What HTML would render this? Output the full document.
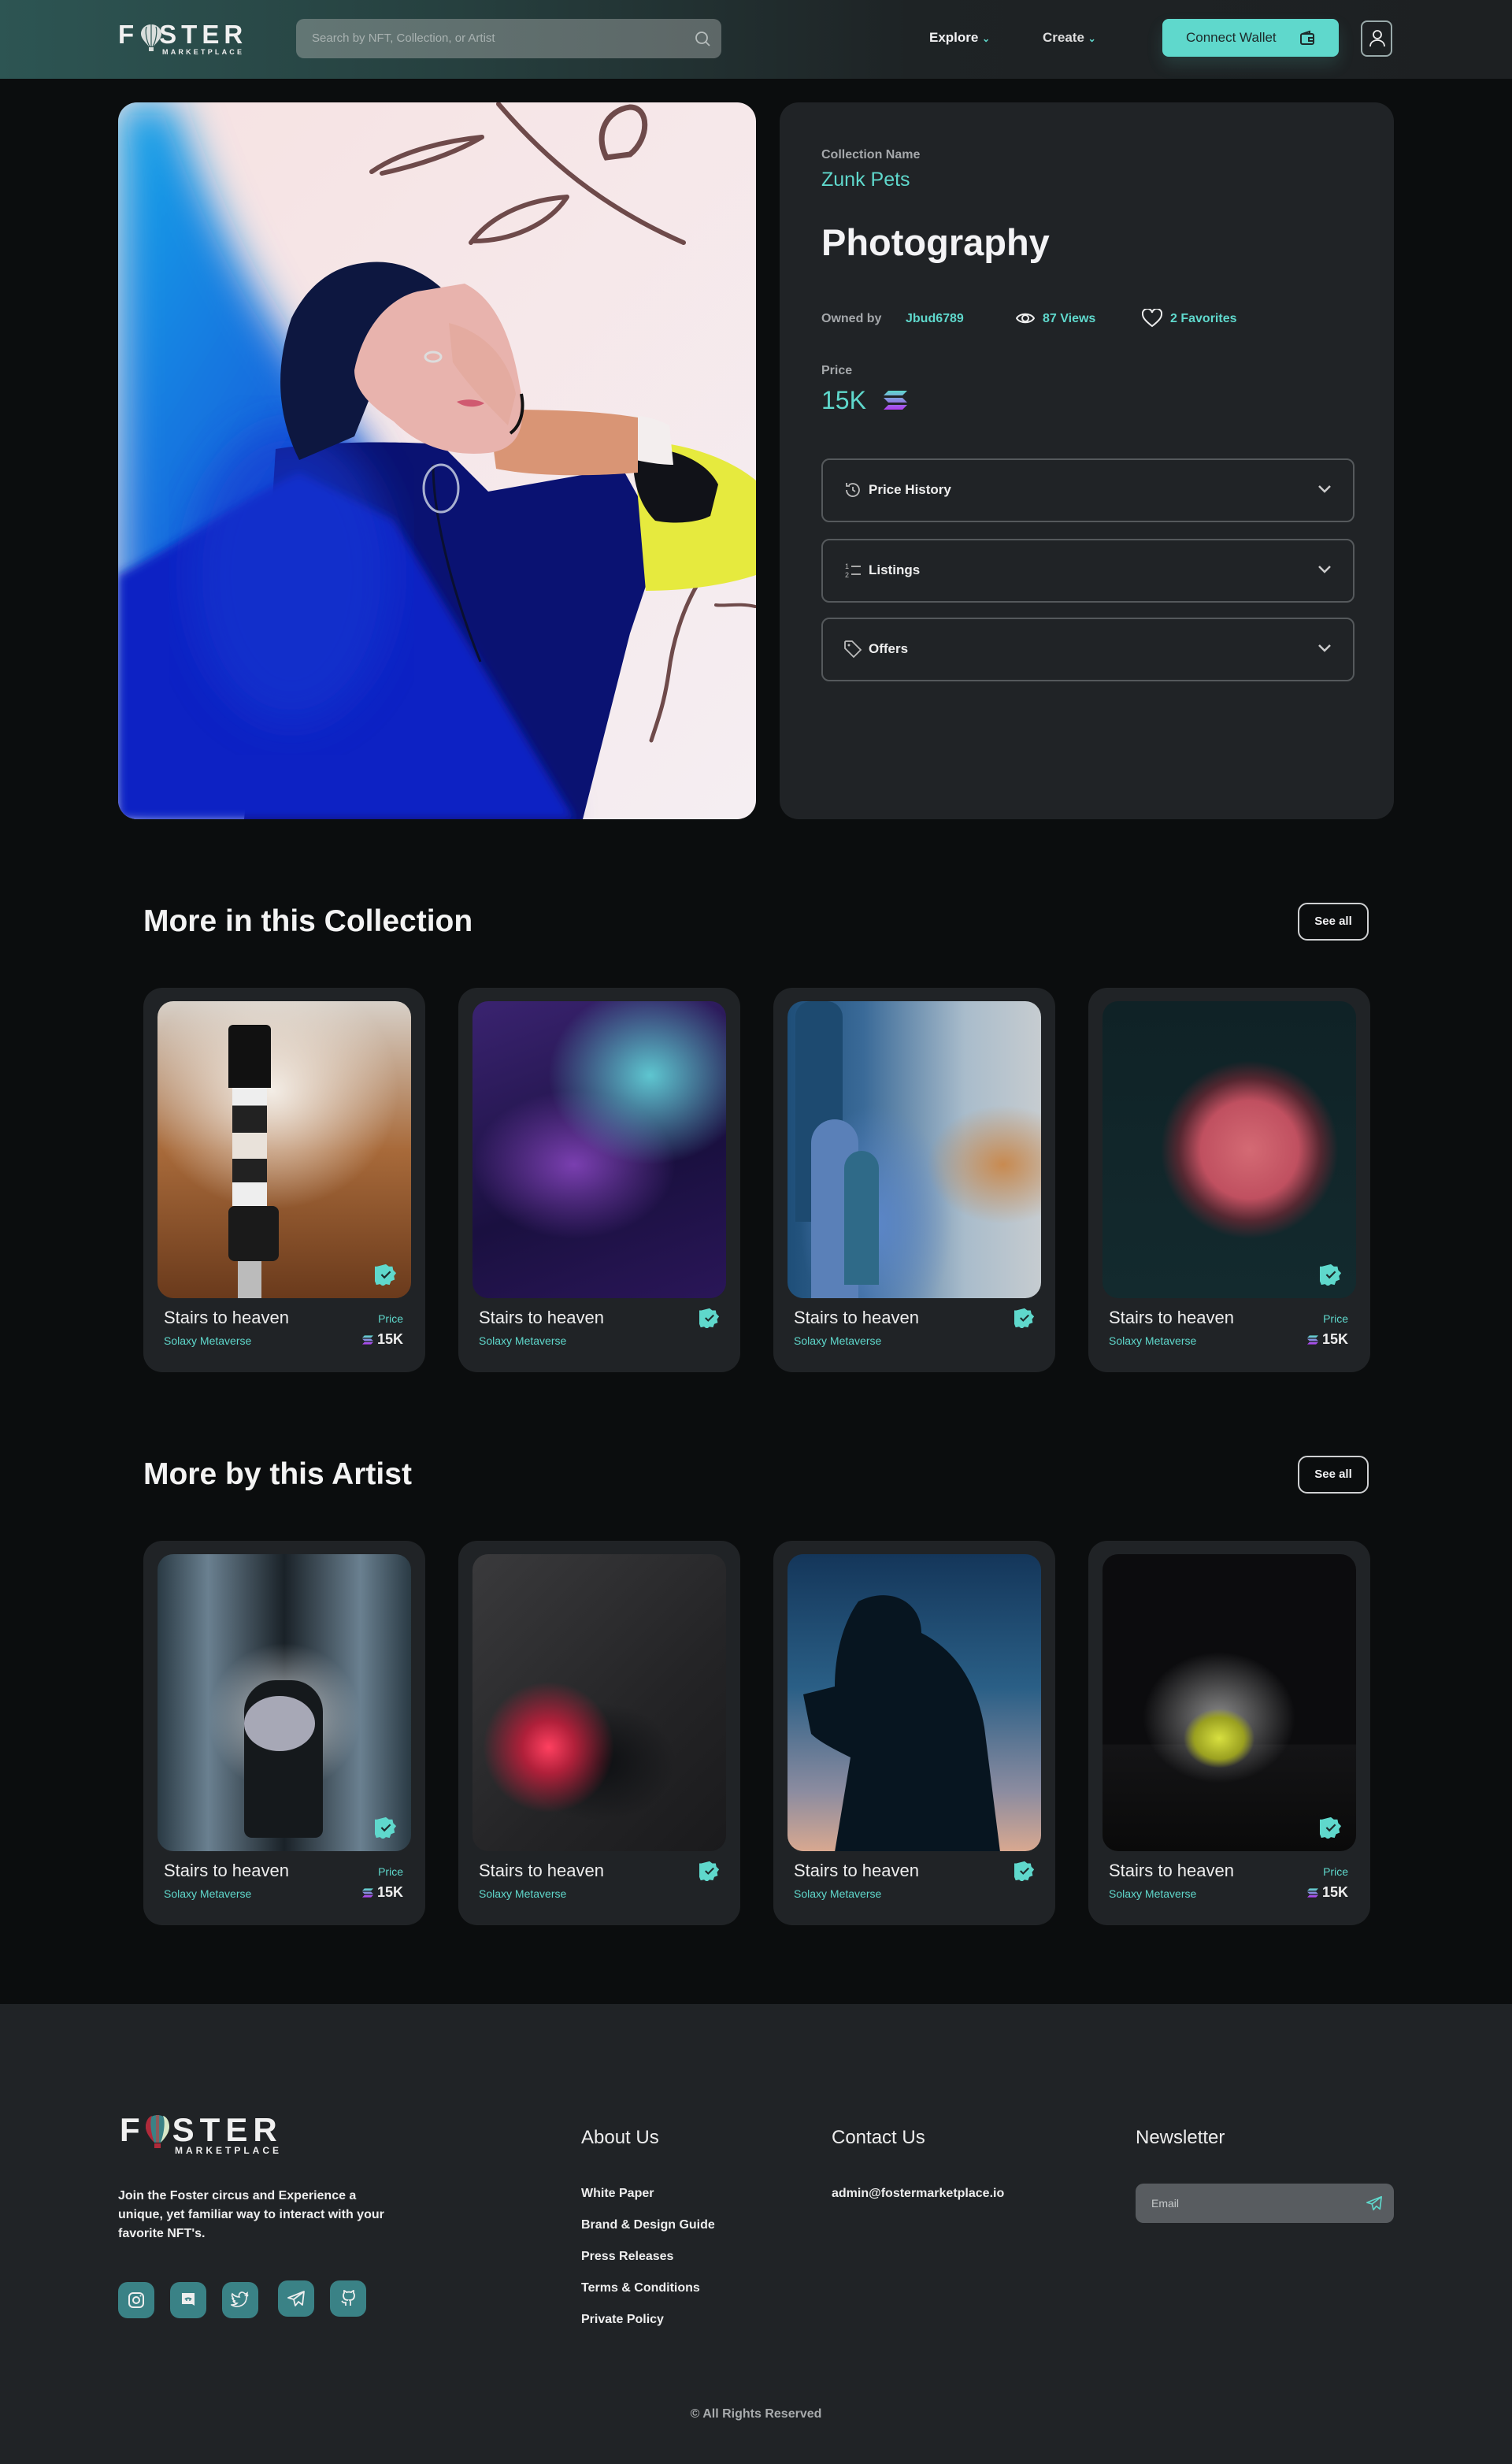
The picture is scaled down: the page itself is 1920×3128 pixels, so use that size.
<!DOCTYPE html>
<html><head><meta charset="utf-8">
<style>
*{margin:0;padding:0;box-sizing:border-box}
body{width:1920px;height:3128px;background:#0b0d0e;font-family:"Liberation Sans",sans-serif;color:#f1f1f3;position:relative;overflow:hidden}
.a{position:absolute}
.hdr{left:0;top:0;width:1920px;height:100px;background:linear-gradient(90deg,#2d5553 0%,#26403f 30%,#1e2325 60%,#1d2022 100%)}
.logo{font-weight:700;letter-spacing:6px;color:#f0f0f0}
.search{left:376px;top:24px;width:540px;height:50px;border-radius:10px;background:linear-gradient(90deg,#627674,#5d6767);color:#a9b2b1;font-size:15px;line-height:50px;padding-left:20px}
.nav{font-size:17px;font-weight:700;top:38px}
.btn{left:1476px;top:24px;width:224px;height:48px;border-radius:8px;background:#5fd8cc;color:#1d2a2a;font-size:17px;line-height:48px;padding-left:30px;box-shadow:0 10px 20px rgba(95,216,204,.15)}
.prof{left:1728px;top:26px;width:40px;height:46px;border:2px solid #9aa;border-radius:8px}
.panel{left:990px;top:130px;width:780px;height:910px;background:#202326;border-radius:24px}
.acc{left:1043px;width:677px;height:81px;border:2px solid #55595c;border-radius:10px}
.acc span{position:absolute;left:58px;top:28px;font-size:17px;font-weight:700;color:#eee}
.acc svg.ic{position:absolute;left:26px;top:26px}
.acc svg.ch{position:absolute;right:26px;top:30px}
.h2{font-size:39px;font-weight:700;color:#f3f3f3}
.see{left:1648px;width:90px;height:48px;border:2px solid #cfd0d2;border-radius:12px;font-size:15px;font-weight:700;text-align:center;line-height:44px}
.card{width:358px;height:488px;background:#202326;border-radius:24px}
.card .im{position:absolute;left:18px;top:17px;width:322px;height:377px;border-radius:20px;overflow:hidden}
.card .t{position:absolute;left:26px;top:406px;font-size:22px;color:#eee}
.card .s{position:absolute;left:26px;top:440px;font-size:14px;color:#5fd8cc}
.card .p{position:absolute;right:28px;top:412px;font-size:14px;color:#5fd8cc}
.card .v{position:absolute;right:28px;top:436px;font-size:18px;font-weight:700;color:#eee}
.badge{position:absolute}
.foot{left:0;top:2544px;width:1920px;height:584px;background:#202326}
.fh{font-size:24px;color:#eee;top:2700px}
.fl{font-size:16px;font-weight:700;color:#eee}
.soc{top:2897px;width:46px;height:46px;border-radius:12px;background:#3a8286}
.soc svg{position:absolute;left:11px;top:11px}
</style></head><body>

<svg width="0" height="0" style="position:absolute"><defs>
<linearGradient id="sol" x1="0" y1="0" x2="0" y2="1"><stop offset="0" stop-color="#5fd8cc"/><stop offset="1" stop-color="#b13cf0"/></linearGradient>
<symbol id="solana" viewBox="0 0 30 24"><path d="M6 0H30L24 6H0Z M0 9H24L30 15H6Z M6 18H30L24 24H0Z" fill="url(#sol)"/></symbol>
<symbol id="chk" viewBox="0 0 30 30"><path d="M15 1l4 3 5 0 1 5 4 4-3 4 1 5-5 2-2 5-5-1-4 3-4-3-5 1-2-5-5-2 1-5-3-4 4-4 1-5 5 0z" fill="#5fd8cc"/><path d="M9 15l4 4 8-8" stroke="#1d2a2a" stroke-width="2.4" fill="none"/></symbol>
</defs></svg>

<!-- header -->
<div class="a hdr"></div>
<div class="a logo" style="left:150px;top:28px;font-size:33px;line-height:32px">F<span style="display:inline-block;width:26px"></span>STER</div>
<svg class="a" style="left:178px;top:30px" width="28" height="36" viewBox="0 0 28 36"><path d="M14 1C6 1 1 7 1 13c0 6 7 12 10 16h6c3-4 10-10 10-16C27 7 22 1 14 1z" fill="#d9dedc"/><path d="M14 1v28M8 4c-2 6 0 18 4 25M20 4c2 6 0 18-4 25" stroke="#2d5553" stroke-width="1.2" fill="none"/><rect x="11" y="30" width="6" height="5" fill="#d9dedc"/></svg>
<div class="a" style="left:206px;top:61px;font-size:9px;letter-spacing:3.2px;font-weight:700;color:#eee">MARKETPLACE</div>
<div class="a search">Search by NFT, Collection, or Artist
<svg style="position:absolute;right:14px;top:15px" width="20" height="20" viewBox="0 0 20 20"><circle cx="9" cy="9" r="7" stroke="#b7bebd" stroke-width="1.8" fill="none"/><path d="M14 14l5 5" stroke="#b7bebd" stroke-width="1.8"/></svg></div>
<div class="a nav" style="left:1180px">Explore <span style="color:#5fd8cc;font-size:12px">&#8964;</span></div>
<div class="a nav" style="left:1324px;color:#ddd">Create <span style="color:#5fd8cc;font-size:12px">&#8964;</span></div>
<div class="a btn">Connect Wallet
<svg style="position:absolute;left:174px;top:14px" width="20" height="20" viewBox="0 0 20 20"><rect x="2" y="5" width="16" height="13" rx="2" stroke="#1d2a2a" stroke-width="2" fill="none"/><path d="M4 5l9-3v3M12 10h6v4h-6z" stroke="#1d2a2a" stroke-width="2" fill="none"/></svg></div>
<div class="a prof"><svg style="position:absolute;left:9px;top:10px" width="20" height="22" viewBox="0 0 20 22"><circle cx="10" cy="6" r="5" stroke="#eee" stroke-width="1.8" fill="none"/><path d="M1 21c0-5 4-8 9-8s9 3 9 8" stroke="#eee" stroke-width="1.8" fill="none"/></svg></div>

<!-- main image -->
<div class="a" style="left:150px;top:130px;width:810px;height:910px;border-radius:24px;overflow:hidden">
<svg width="810" height="910" viewBox="0 0 810 910">
<defs>
<linearGradient id="bgp" x1="0" y1="0" x2="1" y2="1"><stop offset="0" stop-color="#f6e2e2"/><stop offset="1" stop-color="#f5eef2"/></linearGradient>
<linearGradient id="bl" x1="0" y1="0" x2="1" y2="1"><stop offset="0" stop-color="#1aa6e8"/><stop offset=".45" stop-color="#1160dc"/><stop offset="1" stop-color="#0a28c0"/></linearGradient>
<filter id="bb"><feGaussianBlur stdDeviation="25"/></filter>
<filter id="b2"><feGaussianBlur stdDeviation="6"/></filter>
</defs>
<rect width="810" height="910" fill="url(#bgp)"/>
<!-- strokes -->
<g stroke="#6e4a4a" fill="none" stroke-linecap="round">
<path d="M322 88c40-28 100-40 140-44M335 90c45-10 90-24 127-46" stroke-width="6"/>
<path d="M483 2c60 70 130 130 235 176" stroke-width="6"/>
<path d="M620 70c-15-30 0-60 30-64 25 0 25 40 0 60z" stroke-width="7"/>
<path d="M448 178c30-40 80-55 122-58M452 176c45 0 95-20 118-56" stroke-width="6"/>
<path d="M809 545c-60 20-100 100-110 180-6 40-14 60-22 85" stroke-width="5"/>
<path d="M809 640c-20-5-40 0-50-2" stroke-width="4"/>
</g>
<!-- blue left -->
<path d="M0 0H70C130 180 200 300 300 420L560 910H0Z" fill="url(#bl)" filter="url(#bb)"/>
<!-- body -->
<path d="M200 440c60-10 150-10 210-6l60 60 170-30 50 90-40 120-60 236H160L190 600Z" fill="#0a1272"/>
<path d="M0 600c80-40 160-100 230-130l120 60 230 380H0Z" fill="#0d23c4" filter="url(#b2)"/>
<ellipse cx="220" cy="600" rx="130" ry="190" fill="#1238d0" opacity=".6" filter="url(#bb)"/>
<!-- yellow sleeve -->
<path d="M654 430c60 0 120 20 156 50v120c-30 10-80 20-140 20z" fill="#e6ea3e"/>
<path d="M654 440c40-5 90 10 108 45l-10 40c-20 10-50 10-70 6-20-20-30-50-28-91z" fill="#111218"/>
<path d="M640 400c20-5 40 0 60 10l5 50c-20 0-45-5-65-10z" fill="#f3eeee"/>
<!-- arm -->
<path d="M470 390c60 0 130 0 190 10v70c-60 5-130 5-180-5z" fill="#d99575"/>
<!-- hood -->
<path d="M310 204c60-10 110 30 130 70l-20 60-80-10-40 100-70 30c-30-60-30-120-10-180 20-40 50-65 90-70z" fill="#0d1740"/>
<!-- face & hands -->
<path d="M300 340c10-50 40-90 80-100l60-10c40 20 60 70 70 130 10 50 0 80-40 85-50 5-90-10-120-40-30-20-50-40-50-65z" fill="#e8b3ad"/>
<path d="M420 280c40 10 75 40 85 90l-10 40c-20-20-50-50-70-80z" fill="#e2a89a" opacity=".7"/>
<path d="M430 380c10-4 25-4 35 2-10 6-25 6-35-2z" fill="#d05a70"/>
<ellipse cx="400" cy="323" rx="10" ry="6" fill="none" stroke="#ddd" stroke-width="3"/>
<path d="M512 370c4 20 0 40-14 50" stroke="#111" stroke-width="4" fill="none"/>
<!-- zipper -->
<path d="M400 460c0 60 20 150 60 250" stroke="#0a1030" stroke-width="3" fill="none"/>
<ellipse cx="410" cy="490" rx="22" ry="30" fill="none" stroke="#a8b0d0" stroke-width="3"/>
</svg></div>

<!-- panel -->
<div class="a panel"></div>
<div class="a" style="left:1043px;top:188px;font-size:16px;color:#a5a8ab;font-weight:700">Collection Name</div>
<div class="a" style="left:1043px;top:214px;font-size:25px;color:#5fd8cc">Zunk Pets</div>
<div class="a" style="left:1043px;top:280px;font-size:47px;font-weight:700;color:#f3f3f5">Photography</div>
<div class="a" style="left:1043px;top:396px;font-size:16px;color:#a5a8ab;font-weight:700">Owned by</div>
<div class="a" style="left:1150px;top:396px;font-size:16px;color:#5fd8cc;font-weight:700">Jbud6789</div>
<svg class="a" style="left:1290px;top:394px" width="24" height="20" viewBox="0 0 24 20"><path d="M1 10C5 3 19 3 23 10 19 17 5 17 1 10z" stroke="#eee" stroke-width="2" fill="none"/><circle cx="12" cy="10" r="4" stroke="#eee" stroke-width="2" fill="none"/></svg>
<div class="a" style="left:1324px;top:396px;font-size:16px;color:#5fd8cc;font-weight:700">87 Views</div>
<svg class="a" style="left:1450px;top:392px" width="26" height="24" viewBox="0 0 26 24"><path d="M13 22C4 15 1 11 1 7a6 6 0 0 1 12-2 6 6 0 0 1 12 2c0 4-3 8-12 15z" stroke="#eee" stroke-width="2" fill="none"/></svg>
<div class="a" style="left:1486px;top:396px;font-size:16px;color:#5fd8cc;font-weight:700">2 Favorites</div>
<div class="a" style="left:1043px;top:462px;font-size:16px;color:#a5a8ab;font-weight:700">Price</div>
<div class="a" style="left:1043px;top:490px;font-size:32px;color:#5fd8cc">15K</div>
<svg class="a" style="left:1122px;top:496px" width="30" height="24"><use href="#solana"/></svg>

<div class="a acc" style="top:582px"><svg class="ic" width="24" height="24" viewBox="0 0 24 24"><path d="M4 12a8 8 0 1 0 3-6.2M4 3v4h4M12 8v4l3 2" stroke="#bbb" stroke-width="1.8" fill="none"/></svg><span>Price History</span><svg class="ch" width="20" height="14" viewBox="0 0 20 14"><path d="M3 3l7 7 7-7" stroke="#ccc" stroke-width="2.5" fill="none"/></svg></div>
<div class="a acc" style="top:684px"><svg class="ic" width="24" height="24" viewBox="0 0 24 24"><path d="M10 7h12M10 17h12" stroke="#bbb" stroke-width="1.8"/><text x="2" y="10" font-size="9" fill="#bbb" font-family="Liberation Sans">1</text><text x="2" y="21" font-size="9" fill="#bbb" font-family="Liberation Sans">2</text></svg><span>Listings</span><svg class="ch" width="20" height="14" viewBox="0 0 20 14"><path d="M3 3l7 7 7-7" stroke="#ccc" stroke-width="2.5" fill="none"/></svg></div>
<div class="a acc" style="top:784px"><svg class="ic" width="24" height="24" viewBox="0 0 24 24"><path d="M2 3v8l11 11 9-9L11 2H3z" stroke="#bbb" stroke-width="1.8" fill="none"/><circle cx="7" cy="7" r="1.5" fill="#bbb"/></svg><span>Offers</span><svg class="ch" width="20" height="14" viewBox="0 0 20 14"><path d="M3 3l7 7 7-7" stroke="#ccc" stroke-width="2.5" fill="none"/></svg></div>

<!-- section 1 -->
<div class="a h2" style="left:182px;top:1148px">More in this Collection</div>
<div class="a see" style="top:1146px">See all</div>

<div class="a card" style="left:182px;top:1254px"><div class="im" style="background:radial-gradient(ellipse 50% 40% at 45% 30%,#f3ede6,transparent),linear-gradient(180deg,#d7d0c8 0%,#a86a3a 50%,#6a3a1c 100%)">
<div style="position:absolute;left:90px;top:30px;width:54px;height:80px;background:#111;border-radius:6px 6px 0 0"></div>
<div style="position:absolute;left:95px;top:110px;width:44px;height:150px;background:linear-gradient(#eee 0 15%,#222 15% 38%,#e9e2da 38% 60%,#222 60% 80%,#eee 80%)"></div>
<div style="position:absolute;left:90px;top:260px;width:64px;height:70px;background:#1a1a1a;border-radius:8px"></div>
<div style="position:absolute;left:102px;top:330px;width:30px;height:50px;background:#bbb"></div>
</div><svg class="badge" style="right:36px;top:350px" width="28" height="28"><use href="#chk"/></svg>
<div class="t">Stairs to heaven</div><div class="s">Solaxy Metaverse</div><div class="p">Price</div><div class="v"><svg width="14" height="12" style="vertical-align:-1px"><use href="#solana"/></svg> 15K</div></div>

<div class="a card" style="left:582px;top:1254px"><div class="im" style="background:radial-gradient(ellipse 40% 30% at 70% 25%,#5ec6d0,transparent),radial-gradient(ellipse 40% 25% at 40% 55%,#7a3fb0,transparent),linear-gradient(160deg,#3a2370,#1a1040 60%,#2a1658)"></div>
<svg class="badge" style="right:26px;top:406px" width="26" height="26"><use href="#chk"/></svg>
<div class="t">Stairs to heaven</div><div class="s">Solaxy Metaverse</div></div>

<div class="a card" style="left:982px;top:1254px"><div class="im" style="background:radial-gradient(ellipse 30% 20% at 85% 55%,#c88a50,transparent),radial-gradient(ellipse 30% 40% at 35% 75%,#5b86c8,transparent),linear-gradient(90deg,#1e4e78 0%,#3a6a98 30%,#a9bccb 70%,#c6ccd0 100%)">
<div style="position:absolute;left:10px;top:0;width:60px;height:280px;background:#1d4a70;border-radius:20px 20px 0 0"></div>
<div style="position:absolute;left:30px;top:150px;width:60px;height:230px;background:#5a80b8;border-radius:30px 30px 0 0"></div>
<div style="position:absolute;left:72px;top:190px;width:44px;height:170px;background:#2f6a88;border-radius:22px 22px 0 0"></div></div>
<svg class="badge" style="right:26px;top:406px" width="26" height="26"><use href="#chk"/></svg>
<div class="t">Stairs to heaven</div><div class="s">Solaxy Metaverse</div></div>

<div class="a card" style="left:1382px;top:1254px"><div class="im" style="background:radial-gradient(ellipse 35% 30% at 58% 50%,#d46a74 0,#c05060 55%,rgba(150,40,55,.5) 80%,transparent 100%),linear-gradient(#0f2226,#132a2e)"></div>
<svg class="badge" style="right:36px;top:350px" width="28" height="28"><use href="#chk"/></svg>
<div class="t">Stairs to heaven</div><div class="s">Solaxy Metaverse</div><div class="p">Price</div><div class="v"><svg width="14" height="12" style="vertical-align:-1px"><use href="#solana"/></svg> 15K</div></div>

<!-- section 2 -->
<div class="a h2" style="left:182px;top:1850px">More by this Artist</div>
<div class="a see" style="top:1848px">See all</div>

<div class="a card" style="left:182px;top:1956px"><div class="im" style="background:radial-gradient(ellipse 30% 25% at 50% 55%,#c8ccd0,transparent),linear-gradient(90deg,#2a3a44 0,#6a8090 20%,#1a2228 50%,#6a8090 80%,#2a3a44),linear-gradient(#ccd 0,#222 100%)">
<div style="position:absolute;left:110px;top:160px;width:100px;height:200px;background:#15191c;border-radius:40px 40px 10px 10px"></div>
<div style="position:absolute;left:110px;top:180px;width:90px;height:70px;background:#ccd;border-radius:50%;opacity:.8"></div></div>
<svg class="badge" style="right:36px;top:350px" width="28" height="28"><use href="#chk"/></svg>
<div class="t">Stairs to heaven</div><div class="s">Solaxy Metaverse</div><div class="p">Price</div><div class="v"><svg width="14" height="12" style="vertical-align:-1px"><use href="#solana"/></svg> 15K</div></div>

<div class="a card" style="left:582px;top:1956px"><div class="im" style="background:radial-gradient(circle at 30% 65%,#ff4060 0,#b0203a 10%,transparent 25%),radial-gradient(ellipse 30% 20% at 50% 70%,#0d0f12,transparent),linear-gradient(135deg,#3a3a3c,#242426 60%,#1a1a1c)"></div>
<svg class="badge" style="right:26px;top:406px" width="26" height="26"><use href="#chk"/></svg>
<div class="t">Stairs to heaven</div><div class="s">Solaxy Metaverse</div></div>

<div class="a card" style="left:982px;top:1956px"><div class="im" style="background:linear-gradient(#14365a 0,#2a5f86 45%,#8c8ca0 80%,#d8a890 100%)">
<svg width="322" height="378" style="position:absolute;left:0;top:0"><path d="M90 60c40-20 80 0 80 40 40 20 70 60 80 120l20 158H60l20-120c-20-10-40-20-50-30l-10-50 40-10c0-40 10-80 30-108z" fill="#071520"/></svg></div>
<svg class="badge" style="right:26px;top:406px" width="26" height="26"><use href="#chk"/></svg>
<div class="t">Stairs to heaven</div><div class="s">Solaxy Metaverse</div></div>

<div class="a card" style="left:1382px;top:1956px"><div class="im" style="background:radial-gradient(ellipse 14% 10% at 46% 62%,#d8e040,#9aa020 70%,transparent 100%),radial-gradient(ellipse 30% 22% at 46% 55%,#888,transparent),linear-gradient(#0c0c0e 0 64%,#141416 64%,#0a0a0a)"></div>
<svg class="badge" style="right:36px;top:350px" width="28" height="28"><use href="#chk"/></svg>
<div class="t">Stairs to heaven</div><div class="s">Solaxy Metaverse</div><div class="p">Price</div><div class="v"><svg width="14" height="12" style="vertical-align:-1px"><use href="#solana"/></svg> 15K</div></div>

<!-- footer -->
<div class="a foot"></div>
<div class="a logo" style="left:152px;top:2684px;font-size:42px;line-height:40px;letter-spacing:7px">F<span style="display:inline-block;width:34px"></span>STER</div>
<svg class="a" style="left:184px;top:2684px" width="32" height="46" viewBox="0 0 32 46"><path d="M16 1C7 1 1 8 1 16c0 7 8 14 11 20h8c3-6 11-13 11-20C31 8 25 1 16 1z" fill="#3a8286"/><path d="M1 16C1 8 5 3 9 2c-3 6-2 20 3 34C6 30 1 23 1 16z" fill="#b02a3a"/><path d="M31 16C31 8 27 3 23 2c3 6 2 20-3 34 6-6 11-13 11-20z" fill="#d8e8c8"/><path d="M16 1v35" stroke="#8b5a5a" stroke-width="4"/><rect x="12" y="37" width="8" height="6" fill="#b02a3a"/></svg>
<div class="a" style="left:222px;top:2723px;font-size:12px;letter-spacing:4px;font-weight:700;color:#eee">MARKETPLACE</div>
<div class="a" style="left:150px;top:2776px;width:360px;font-size:16px;font-weight:700;line-height:24px;color:#eee">Join the Foster circus and Experience a unique, yet familiar way to interact with your favorite NFT's.</div>

<div class="a soc" style="left:150px"><svg width="24" height="24" viewBox="0 0 24 24"><rect x="3" y="3" width="18" height="18" rx="5" stroke="#eee" stroke-width="2" fill="none"/><circle cx="12" cy="12" r="4" stroke="#eee" stroke-width="2" fill="none"/><circle cx="17.5" cy="6.5" r="1" fill="#eee"/></svg></div>
<div class="a soc" style="left:216px"><svg width="24" height="24" viewBox="0 0 24 24"><path d="M4 3h16v16l-3-2H4z" fill="#eee"/><path d="M8 11c2-2 6-2 8 0" stroke="#3a8286" stroke-width="2" fill="none"/><circle cx="10" cy="12" r="1" fill="#3a8286"/><circle cx="14" cy="12" r="1" fill="#3a8286"/></svg></div>
<div class="a soc" style="left:282px"><svg width="24" height="24" viewBox="0 0 24 24"><path d="M22 5c-1 1-2 1-3 1 1-1 2-2 2-3-1 1-2 1-3 1a4 4 0 0 0-7 4C7 8 4 6 2 4c-1 2 0 5 2 6-1 0-2 0-2-1 0 2 2 4 4 4-1 0-2 1-3 0 1 2 3 3 5 3-2 2-5 2-7 2 9 5 19 0 19-10z" stroke="#eee" stroke-width="1.6" fill="none"/></svg></div>
<div class="a soc" style="left:353px;top:2895px"><svg width="24" height="24" viewBox="0 0 24 24"><path d="M22 3L2 11l7 2 2 8 4-5 5 4zM9 13l13-10" stroke="#eee" stroke-width="1.8" fill="none" stroke-linejoin="round"/></svg></div>
<div class="a soc" style="left:419px;top:2895px"><svg width="24" height="24" viewBox="0 0 24 24"><path d="M9 21v-4c-3 1-4-1-5-2M15 21v-4c0-1 0-2-1-3 3 0 6-1 6-6 0-1 0-2-1-3V2c-1 0-2 1-3 2a11 11 0 0 0-6 0C9 3 8 2 7 2v3C6 6 6 7 6 8c0 5 3 6 6 6" stroke="#eee" stroke-width="1.8" fill="none"/></svg></div>

<div class="a fh" style="left:738px">About Us</div>
<div class="a fh" style="left:1056px">Contact Us</div>
<div class="a fh" style="left:1442px">Newsletter</div>
<div class="a fl" style="left:738px;top:2776px">White Paper</div>
<div class="a fl" style="left:738px;top:2816px">Brand &amp; Design Guide</div>
<div class="a fl" style="left:738px;top:2856px">Press Releases</div>
<div class="a fl" style="left:738px;top:2896px">Terms &amp; Conditions</div>
<div class="a fl" style="left:738px;top:2936px">Private Policy</div>
<div class="a fl" style="left:1056px;top:2776px">admin@fostermarketplace.io</div>
<div class="a" style="left:1442px;top:2772px;width:328px;height:50px;border-radius:10px;background:#585c60;font-size:14px;color:#c4c8c9;line-height:50px;padding-left:20px">Email
<svg style="position:absolute;right:14px;top:14px" width="22" height="22" viewBox="0 0 24 24"><path d="M22 3L2 11l7 2 2 8 4-5 5 4zM9 13l13-10" stroke="#5fd8cc" stroke-width="1.8" fill="none" stroke-linejoin="round"/></svg></div>
<div class="a" style="left:0;width:1920px;top:3056px;text-align:center;font-size:16px;font-weight:700;color:#a8abad">© All Rights Reserved</div>
</body></html>
